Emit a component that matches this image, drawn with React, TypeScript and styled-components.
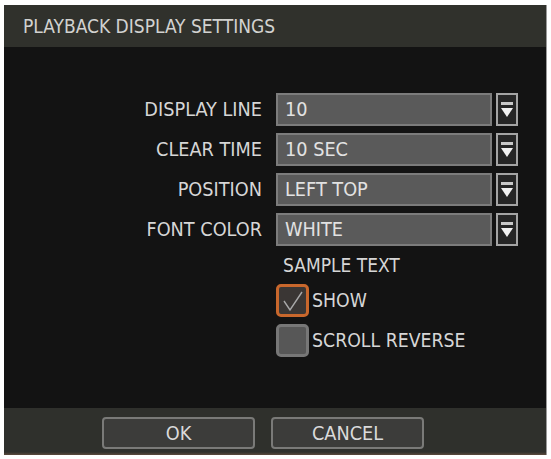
import styled, { createGlobalStyle } from 'styled-components';

const GlobalStyle = createGlobalStyle`
  html, body {
    margin: 0;
    padding: 0;
    background: #ffffff;
  }
`;

const Page = styled.div`
  width: 551px;
  height: 459px;
  padding: 5px 5px 4px 4px;
  box-sizing: border-box;
  font-family: 'DejaVu Sans Condensed', 'DejaVu Sans', sans-serif;
  font-stretch: semi-condensed;
`;

const Dialog = styled.div`
  width: 542px;
  height: 450px;
  display: flex;
  flex-direction: column;
  background: #131313;
  box-shadow: 1px 0 0 #9a9a9a;
`;

const TitleBar = styled.div`
  height: 42px;
  display: flex;
  align-items: center;
  padding-left: 19px;
  background: #30312c;
  color: #d2d2d0;
  font-size: 19px;
`;

const Body = styled.div`
  flex: 1;
  padding-top: 46px;
  display: flex;
  flex-direction: column;
  gap: 7px;
`;

const Row = styled.div<{ $short?: boolean }>`
  display: grid;
  grid-template-columns: 258px 242px;
  column-gap: 14px;
  align-items: center;
  height: ${(p) => (p.$short ? '24px' : '33px')};
`;

const Label = styled.div`
  text-align: right;
  color: #d6d6d6;
  font-size: 19.7px;
`;

const Select = styled.div`
  display: flex;
  gap: 4px;
  height: 33px;
`;

const Field = styled.div`
  flex: 1;
  display: flex;
  align-items: center;
  padding-left: 7px;
  background: #5a5a5a;
  border: 2px solid #7c7c7c;
  box-sizing: border-box;
  color: #e2e2e2;
  font-size: 19.7px;
`;

const ArrowButton = styled.div`
  width: 22px;
  box-sizing: border-box;
  border: 2px solid #a4a4a4;
  background: #262626;
  display: flex;
  align-items: center;
  justify-content: center;
`;

const SampleText = styled.div`
  padding-left: 7px;
  color: #d6d6d6;
  font-size: 19px;
`;

const CheckLabel = styled.label`
  display: flex;
  align-items: center;
  gap: 3px;
  color: #d6d6d6;
  font-size: 19.3px;
`;

const Box = styled.span<{ $focused?: boolean }>`
  width: 33px;
  height: 33px;
  box-sizing: border-box;
  border-radius: 5px;
  border: 3px solid ${(p) => (p.$focused ? '#c8672c' : '#777777')};
  background: ${(p) => (p.$focused ? '#3a3634' : '#575757')};
  display: flex;
  align-items: center;
  justify-content: center;
`;

const Footer = styled.div`
  height: 47px;
  box-sizing: border-box;
  padding: 9px 0 0 98px;
  display: flex;
  gap: 16px;
  background: linear-gradient(#2f302c 0, #2f302c 44px, #5b4a3c 47px);
`;

const Button = styled.div`
  width: 153px;
  height: 32px;
  box-sizing: border-box;
  border: 2px solid #7a7a78;
  border-radius: 4px;
  background: #3c3c3a;
  color: #dadada;
  font-size: 19.7px;
  display: flex;
  align-items: center;
  justify-content: center;
`;

const DropIcon = () => (
  <svg width="12" height="20" viewBox="0 0 12 20">
    <rect x="0" y="2" width="12" height="3" fill="#c8c8c8" />
    <polygon points="0,8 12,8 6,17" fill="#f2f2f2" />
  </svg>
);

const CheckIcon = () => (
  <svg width="24" height="24" viewBox="0 0 24 24">
    <polyline points="3,12 9,21 21,3" fill="none" stroke="#a8a8a8" strokeWidth="1.4" />
  </svg>
);

const settings = [
  { label: 'DISPLAY LINE', value: '10' },
  { label: 'CLEAR TIME', value: '10 SEC' },
  { label: 'POSITION', value: 'LEFT TOP' },
  { label: 'FONT COLOR', value: 'WHITE' },
];

const App = (): JSX.Element => {
  return (
    <Page>
      <GlobalStyle />
      <Dialog>
        <TitleBar>PLAYBACK DISPLAY SETTINGS</TitleBar>
        <Body>
          {settings.map((s) => (
            <Row key={s.label}>
              <Label>{s.label}</Label>
              <Select>
                <Field>{s.value}</Field>
                <ArrowButton>
                  <DropIcon />
                </ArrowButton>
              </Select>
            </Row>
          ))}
          <Row $short>
            <span />
            <SampleText>SAMPLE TEXT</SampleText>
          </Row>
          <Row>
            <span />
            <CheckLabel>
              <Box $focused>
                <CheckIcon />
              </Box>
              SHOW
            </CheckLabel>
          </Row>
          <Row>
            <span />
            <CheckLabel>
              <Box />
              SCROLL REVERSE
            </CheckLabel>
          </Row>
        </Body>
        <Footer>
          <Button>OK</Button>
          <Button>CANCEL</Button>
        </Footer>
      </Dialog>
    </Page>
  );
};

export default App;
